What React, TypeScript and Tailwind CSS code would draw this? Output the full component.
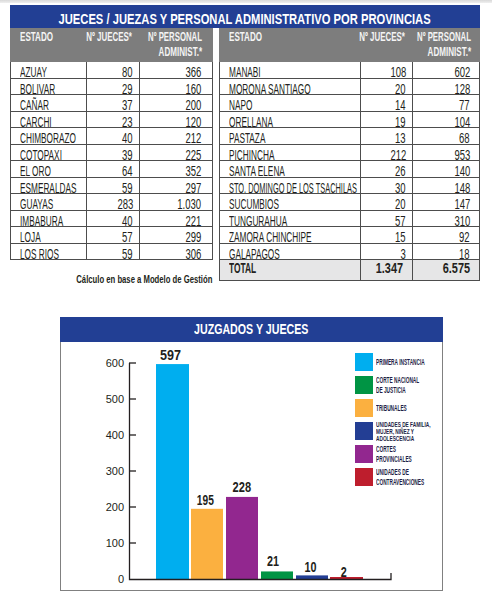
import React from "react";

type Row = [string, string, string];

const leftRows: Row[] = [
  ["AZUAY", "80", "366"],
  ["BOLIVAR", "29", "160"],
  ["CAÑAR", "37", "200"],
  ["CARCHI", "23", "120"],
  ["CHIMBORAZO", "40", "212"],
  ["COTOPAXI", "39", "225"],
  ["EL ORO", "64", "352"],
  ["ESMERALDAS", "59", "297"],
  ["GUAYAS", "283", "1.030"],
  ["IMBABURA", "40", "221"],
  ["LOJA", "57", "299"],
  ["LOS RIOS", "59", "306"],
];

const rightRows: Row[] = [
  ["MANABI", "108", "602"],
  ["MORONA SANTIAGO", "20", "128"],
  ["NAPO", "14", "77"],
  ["ORELLANA", "19", "104"],
  ["PASTAZA", "13", "68"],
  ["PICHINCHA", "212", "953"],
  ["SANTA ELENA", "26", "140"],
  ["STO. DOMINGO DE LOS TSACHILAS", "30", "148"],
  ["SUCUMBIOS", "20", "147"],
  ["TUNGURAHUA", "57", "310"],
  ["ZAMORA CHINCHIPE", "15", "92"],
  ["GALAPAGOS", "3", "18"],
];

const bars = [
  { v: 597, x: 156, w: 33, c: "#00aeef", lx: 170.5, ly: 360, tl: 21 },
  { v: 195, x: 191, w: 32, c: "#fbb040", lx: 205.3, ly: 505, tl: 17 },
  { v: 228, x: 226, w: 32, c: "#92278f", lx: 241.8, ly: 492, tl: 18.5 },
  { v: 21, x: 261, w: 32, c: "#009444", lx: 273, ly: 566, tl: 12 },
  { v: 10, x: 296, w: 32, c: "#233e94", lx: 310.5, ly: 572, tl: 12 },
  { v: 2, x: 330, w: 33, c: "#be1e2d", lx: 343.7, ly: 577, tl: 6 },
];

const legend = [
  { c: "#00aeef", lines: ["PRIMERA INSTANCIA"], small: false },
  { c: "#009444", lines: ["CORTE NACIONAL", "DE JUSTICIA"], small: false },
  { c: "#fbb040", lines: ["TRIBUNALES"], small: false },
  { c: "#233e94", lines: ["UNIDADES DE FAMILIA,", "MUJER, NIÑEZ Y", "ADOLESCENCIA"], small: true },
  { c: "#92278f", lines: ["CORTES", "PROVINCIALES"], small: false },
  { c: "#be1e2d", lines: ["UNIDADES DE", "CONTRAVENCIONES"], small: false },
];

function Narrow({ children, className }: { children: React.ReactNode; className: string }) {
  return <span className={`inline-block whitespace-nowrap ${className}`}>{children}</span>;
}

function Table({
  rows,
  c1,
  c2,
  c3,
  total,
}: {
  rows: Row[];
  c1: string;
  c2: string;
  c3: string;
  total?: Row;
}) {
  return (
    <div>
      <div className="flex h-[34px] bg-[#7d7d7d] pt-[2px] text-[13px] font-bold leading-[14.5px] text-[#f4f4f4]">
        <div className={`${c1} shrink-0 pl-[10px]`}>
          <Narrow className="origin-left scale-x-[0.62]">ESTADO</Narrow>
        </div>
        <div className={`${c2} flex shrink-0 justify-end pr-[7px]`}>
          <Narrow className="origin-right scale-x-[0.61]">Nº JUECES*</Narrow>
        </div>
        <div className={`flex min-w-0 flex-1 flex-col items-end ${c3}`}>
          <Narrow className="origin-right scale-x-[0.6]">Nº PERSONAL</Narrow>
          <Narrow className="origin-right scale-x-[0.62]">ADMINIST.*</Narrow>
        </div>
      </div>
      <div className="border-x border-[#4d4d4d]">
        {rows.map(([name, a, b]) => (
          <div key={name} className="flex h-[16.5px] border-b border-[#4d4d4d] text-[14px] leading-[14px]">
            <div className={`${c1} shrink-0 border-r border-[#4d4d4d] pl-[9px] pt-[3px]`}>
              <Narrow
                className={
                  name.length > 20 ? "origin-left scale-x-[0.53]" : "origin-left scale-x-[0.59]"
                }
              >
                {name}
              </Narrow>
            </div>
            <div className={`${c2} flex shrink-0 justify-end border-r border-[#4d4d4d] pr-[6px] pt-[3px]`}>
              <Narrow className="origin-right scale-x-[0.68]">{a}</Narrow>
            </div>
            <div className={`flex min-w-0 flex-1 justify-end pt-[3px] ${c3}`}>
              <Narrow className="origin-right scale-x-[0.68]">{b}</Narrow>
            </div>
          </div>
        ))}
        {total && (
          <div className="flex h-[21px] border-b border-[#4d4d4d] bg-[#e6e6e7] text-[14px] font-bold leading-[16px]">
            <div className={`${c1} shrink-0 border-r border-[#4d4d4d] pl-[9px]`}>
              <Narrow className="origin-left scale-x-[0.6]">{total[0]}</Narrow>
            </div>
            <div className={`${c2} flex shrink-0 justify-end border-r border-[#4d4d4d] pr-[9px]`}>
              <Narrow className="origin-right scale-x-[0.78]">{total[1]}</Narrow>
            </div>
            <div className={`flex min-w-0 flex-1 justify-end ${c3}`}>
              <Narrow className="origin-right scale-x-[0.78]">{total[2]}</Narrow>
            </div>
          </div>
        )}
      </div>
    </div>
  );
}

function Chart() {
  const ticks = [0, 100, 200, 300, 400, 500, 600];
  return (
    <svg width="381" height="248" viewBox="61 342 381 248" className="block">
      {bars.map((b) => {
        const h = Math.max(b.v * 0.36, 2);
        return (
          <g key={b.v}>
            <rect x={b.x} y={579 - h} width={b.w} height={h} fill={b.c} />
            <text
              x={b.lx}
              y={b.ly}
              textAnchor="middle"
              fontSize="14"
              fontWeight="bold"
              fill="#231f20"
              textLength={b.tl}
              lengthAdjust="spacingAndGlyphs"
              fontFamily="Liberation Sans, Arial, sans-serif"
            >
              {b.v}
            </text>
          </g>
        );
      })}
      <path d="M129.5 363 V579.5 H391 V573" fill="none" stroke="#231f20" strokeWidth="1.3" />
      {ticks.map((t) => {
        const y = 579 - t * 0.36;
        return (
          <g key={t}>
            {t > 0 && <line x1="129" x2="136" y1={y} y2={y} stroke="#231f20" strokeWidth="1.3" />}
            <text
              x="124"
              y={y + 4}
              textAnchor="end"
              fontSize="11"
              fill="#231f20"
              fontFamily="Liberation Sans, Arial, sans-serif"
            >
              {t}
            </text>
          </g>
        );
      })}
    </svg>
  );
}

export default function App() {
  return (
    <div className="h-[592px] w-[492px] overflow-hidden bg-white font-['Liberation_Sans',Arial,sans-serif] text-[#231f20]">
      <div className="h-[3px] bg-gradient-to-b from-[#d9d9d9] to-[#efefef]" />
      <div className="ml-[10px] mt-[2px] w-[470px]">
        <div className="h-[23px] bg-[#223f94] pt-[3px] text-center text-[14px] font-bold leading-[22px] text-white">
          <Narrow className="origin-center scale-x-[0.8]">
            JUECES / JUEZAS Y PERSONAL ADMINISTRATIVO POR PROVINCIAS
          </Narrow>
        </div>
        <div className="flex items-start gap-[6px]">
          <div className="w-[203px]">
            <Table rows={leftRows} c1="w-[76px]" c2="w-[53px]" c3="pr-[11px]" />
            <div className="mt-[13px] flex justify-end pr-[1px] text-[11px] font-bold leading-[12px]">
              <Narrow className="origin-right scale-x-[0.7]">Cálculo en base a Modelo de Gestión</Narrow>
            </div>
          </div>
          <div className="w-[261px]">
            <Table
              rows={rightRows}
              c1="w-[141px]"
              c2="w-[52px]"
              c3="pr-[9px]"
              total={["TOTAL", "1.347", "6.575"]}
            />
          </div>
        </div>
      </div>

      <div className="ml-[60px] mt-[32px] w-[383px]">
        <div className="h-[25px] bg-[#223f94] text-center text-[14px] font-bold leading-[25px] text-white">
          <Narrow className="origin-center scale-x-[0.76]">JUZGADOS Y JUECES</Narrow>
        </div>
        <div className="relative h-[249px] border-x border-b border-[#808080]">
          <Chart />
          <div className="absolute left-[294px] top-[11px] flex flex-col gap-[5px]">
            {legend.map((l) => (
              <div key={l.c} className="flex h-[18px] items-center gap-[3px]">
                <div className="h-[18px] w-[18px] shrink-0" style={{ backgroundColor: l.c }} />
                <div
                  className={
                    l.small
                      ? "flex flex-col text-[7px] font-bold leading-[7px] text-[#1e1e46]"
                      : "flex flex-col text-[9px] font-bold leading-[10px] text-[#1e1e46]"
                  }
                >
                  {l.lines.map((t) => (
                    <Narrow key={t} className={l.small ? "origin-left scale-x-[0.68]" : "origin-left scale-x-[0.53]"}>
                      {t}
                    </Narrow>
                  ))}
                </div>
              </div>
            ))}
          </div>
        </div>
      </div>
    </div>
  );
}
